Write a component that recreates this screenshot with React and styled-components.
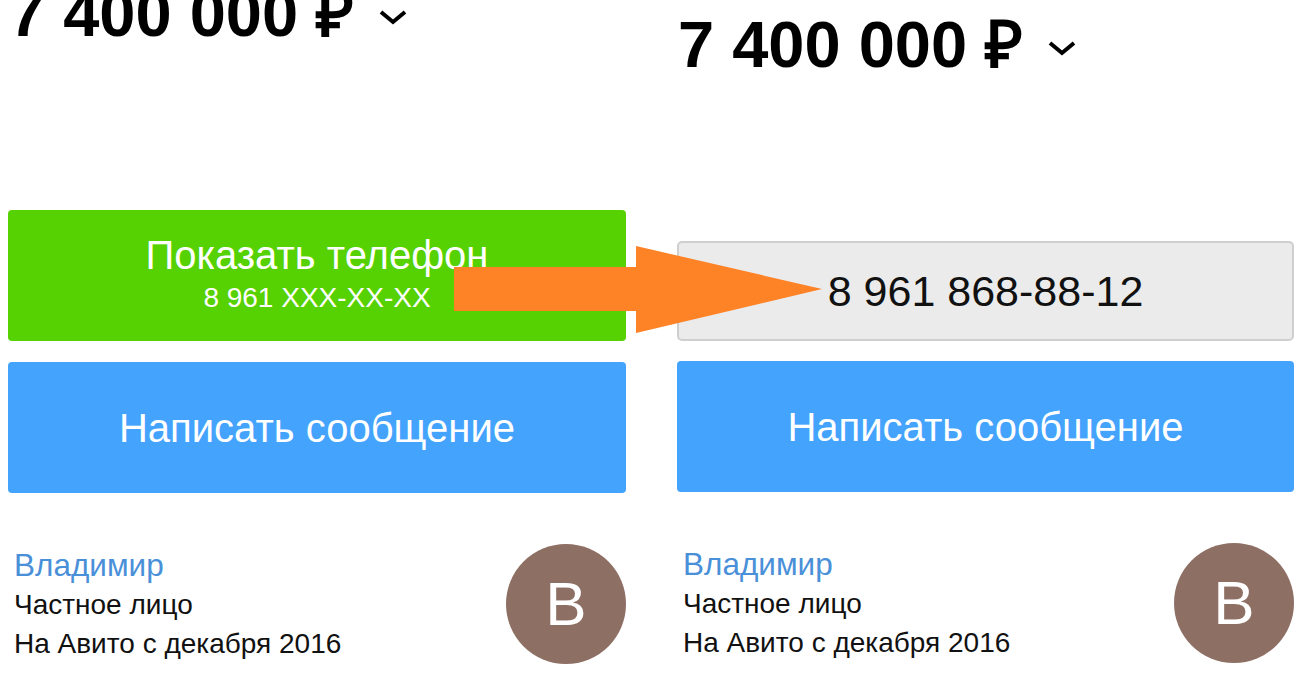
import React from 'react';
import styled, { createGlobalStyle } from 'styled-components';

const GlobalStyle = createGlobalStyle`
  html, body {
    margin: 0;
    padding: 0;
    background: #fff;
    overflow: hidden;
  }
  body {
    font-family: 'Liberation Sans', Arial, sans-serif;
    color: #000;
  }
`;

const Page = styled.div`
  position: relative;
  width: 1296px;
  height: 695px;
  box-sizing: border-box;
  padding: 8px 2px 0 8px;
  display: grid;
  grid-template-columns: 618px 617px;
  column-gap: 51px;
  align-items: start;
`;

const Column = styled.div`
  display: flex;
  flex-direction: column;
  margin-top: ${(p) => p.$shift || 0}px;
`;

const PriceRow = styled.div`
  display: flex;
  align-items: center;
  gap: 25px;
  font-size: 65px;
  font-weight: 700;
  line-height: 74px;
  padding-left: 1px;
  margin-bottom: ${(p) => p.$space}px;
`;

const Chevron = styled.svg`
  width: 28px;
  height: 16px;
  margin-top: 6px;
`;

const Button = styled.div`
  box-sizing: border-box;
  height: 131px;
  padding-bottom: ${(p) => p.$pb || 0}px;
  border-radius: 4px;
  background: ${(p) => p.$bg};
  color: #fff;
  display: flex;
  flex-direction: column;
  align-items: center;
  justify-content: center;
  text-align: center;
`;

const MainLabel = styled.div`
  font-size: 40px;
  line-height: 44px;
`;

const SubLabel = styled.div`
  font-size: 28px;
  line-height: 32px;
  margin-top: 5px;
`;

const PhoneBox = styled.div`
  box-sizing: border-box;
  height: 100px;
  border: 2px solid #cfcfcf;
  border-radius: 5px;
  background: #ebebeb;
  display: flex;
  align-items: center;
  justify-content: center;
  font-size: 43px;
  color: #111;
  margin-bottom: 20px;
`;

const Spacer = styled.div`
  height: ${(p) => p.$h}px;
`;

const Seller = styled.div`
  display: flex;
  justify-content: space-between;
  align-items: flex-start;
  margin-top: ${(p) => p.$top}px;
  padding-left: 6px;
`;

const SellerInfo = styled.div`
  display: flex;
  flex-direction: column;
  line-height: 39px;
  margin-top: 2px;
`;

const Name = styled.a`
  font-size: 31.5px;
  color: #4a90d9;
  text-decoration: none;
`;

const Meta = styled.div`
  font-size: 28px;
  color: #111;
`;

const Avatar = styled.div`
  width: 120px;
  height: 120px;
  border-radius: 50%;
  background: #8d6f64;
  color: #fff;
  display: flex;
  align-items: center;
  justify-content: center;
  font-size: 62px;
  line-height: 1;
`;

const Arrow = styled.svg`
  position: absolute;
  left: 454px;
  top: 245px;
  width: 370px;
  height: 90px;
`;

function Price({ space }) {
  return (
    <PriceRow $space={space}>
      <span>7 400 000 ₽</span>
      <Chevron viewBox="0 0 28 16">
        <polyline points="2,3 14,13 26,3" fill="none" stroke="#000" strokeWidth="4" />
      </Chevron>
    </PriceRow>
  );
}

function SellerBlock({ top }) {
  return (
    <Seller $top={top}>
      <SellerInfo>
        <Name href="#">Владимир</Name>
        <Meta>Частное лицо</Meta>
        <Meta>На Авито с декабря 2016</Meta>
      </SellerInfo>
      <Avatar>В</Avatar>
    </Seller>
  );
}

export default function App() {
  return (
    <>
      <GlobalStyle />
      <Page>
        <Column $shift={-31}>
          <Price space={159} />
          <Button $bg="#56d102" $pb={4}>
            <MainLabel>Показать телефон</MainLabel>
            <SubLabel>8 961 XXX-XX-XX</SubLabel>
          </Button>
          <Spacer $h={21} />
          <Button $bg="#43a3fd">
            <MainLabel>Написать сообщение</MainLabel>
          </Button>
          <SellerBlock top={51} />
        </Column>
        <Column>
          <Price space={159} />
          <PhoneBox>8 961 868-88-12</PhoneBox>
          <Button $bg="#43a3fd">
            <MainLabel>Написать сообщение</MainLabel>
          </Button>
          <SellerBlock top={51} />
        </Column>
        <Arrow viewBox="0 0 370 90">
          <polygon
            points="0,22 182,22 182,1 368,44 182,88 182,66 0,66"
            fill="#fe8226"
          />
        </Arrow>
      </Page>
    </>
  );
}
